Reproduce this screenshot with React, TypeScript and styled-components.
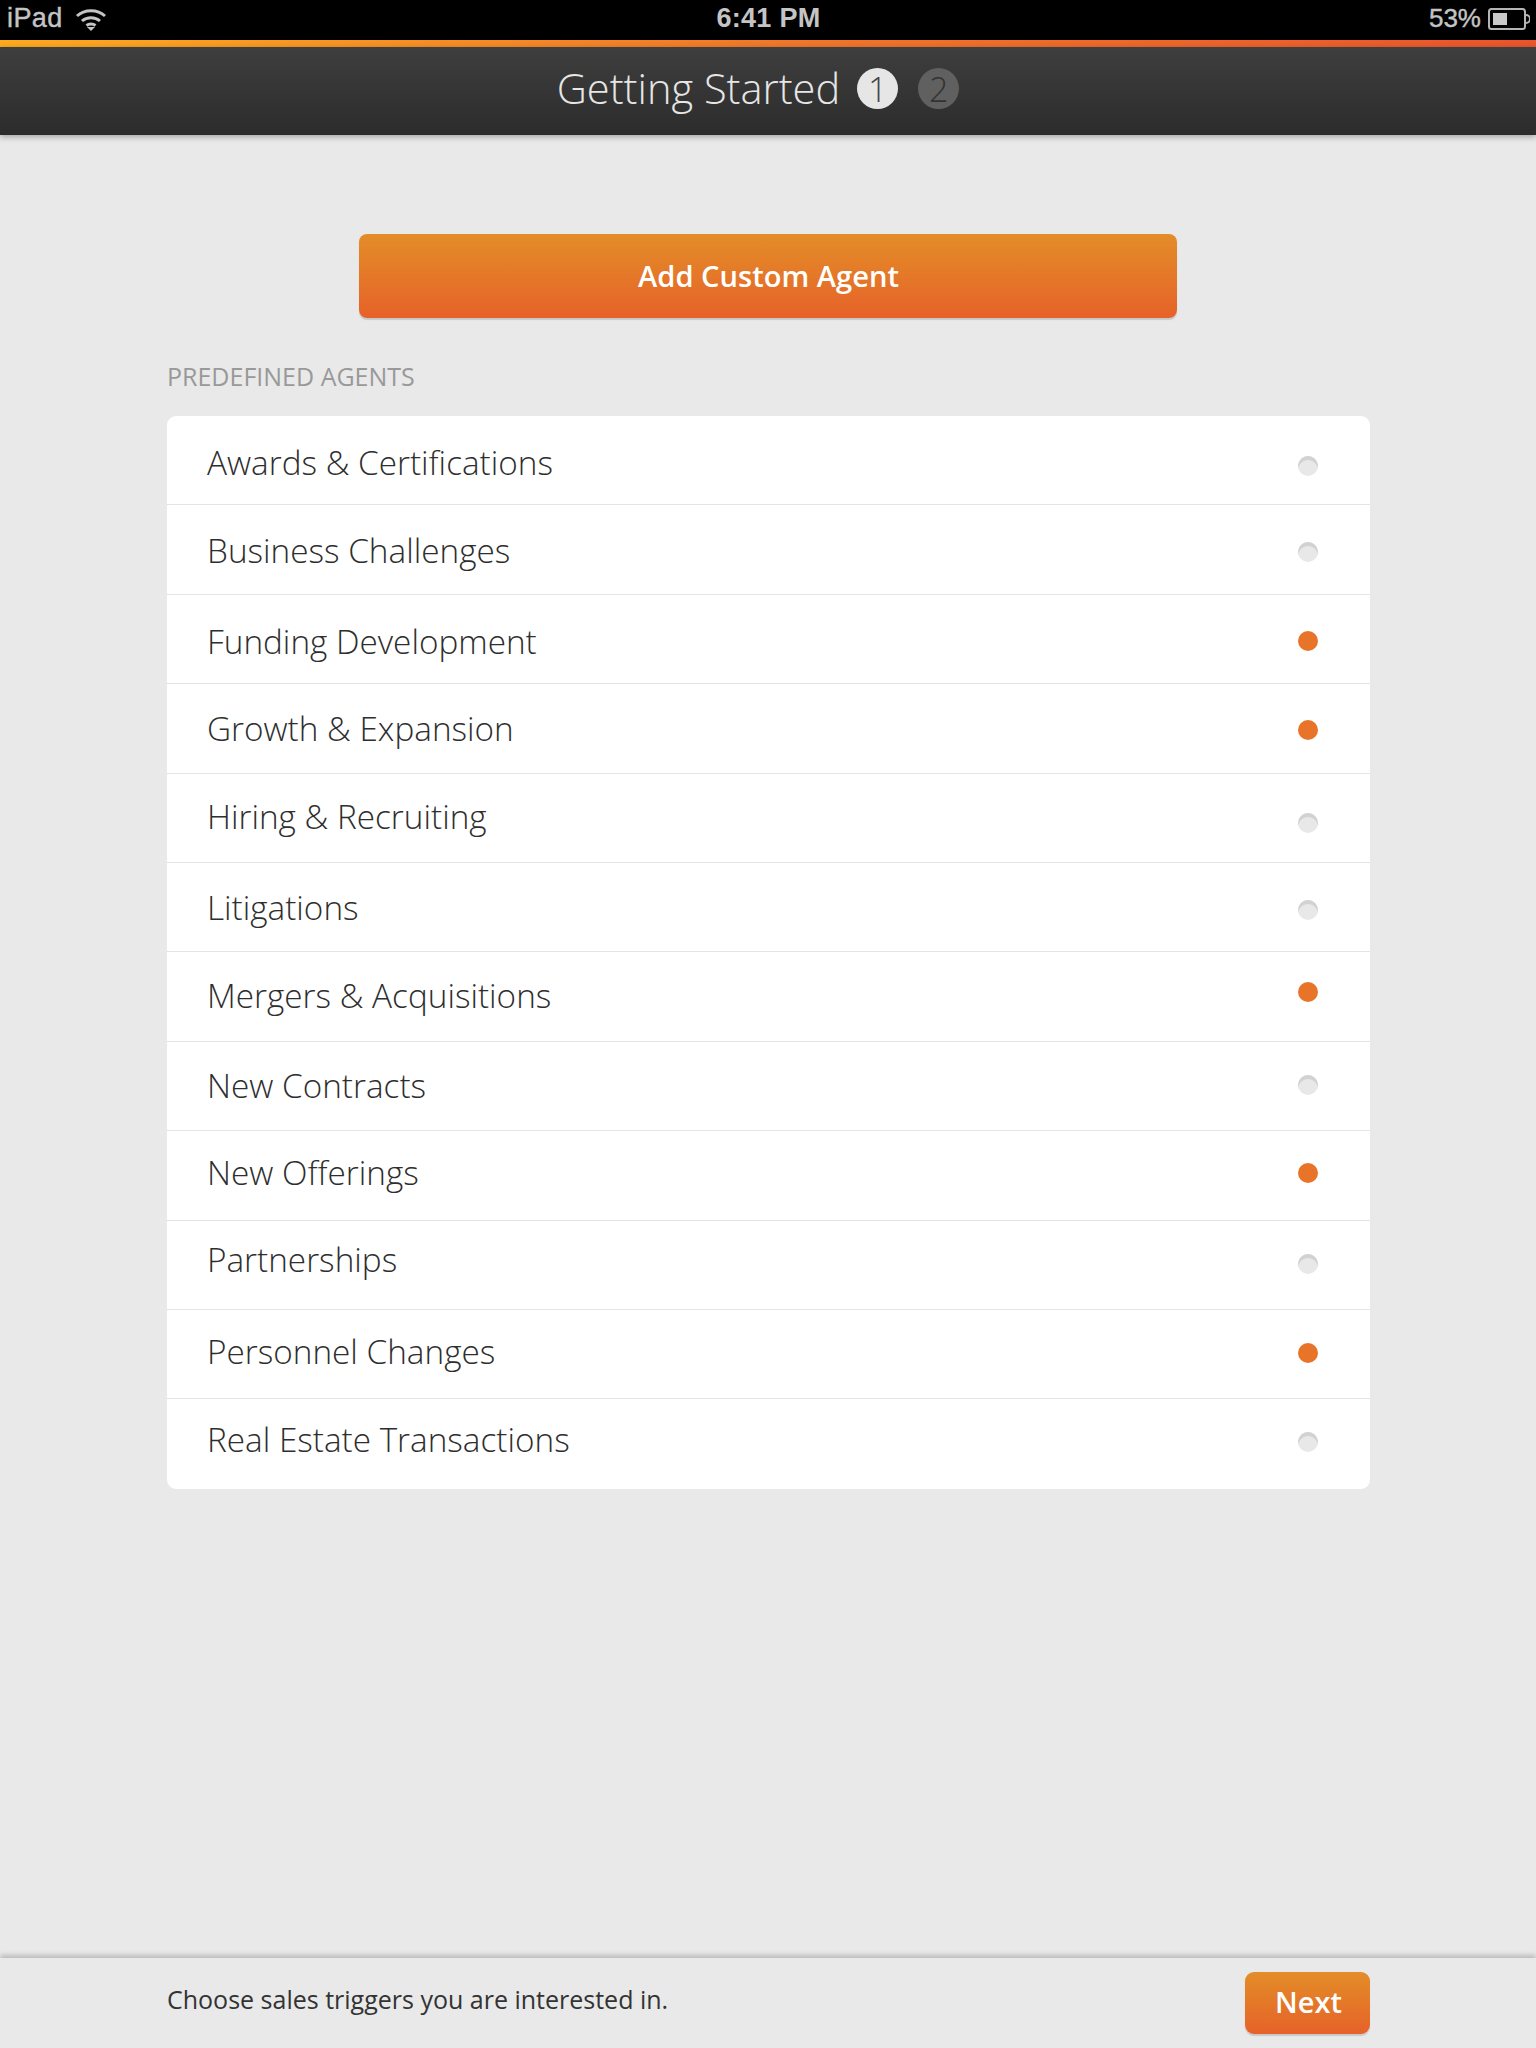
import styled, { createGlobalStyle } from "styled-components";

// the rows in the reference sit a few px off their centres, so each keeps its own nudge
const agents = [
  { name: "Awards & Certifications", on: false, textDy: 2, dotDy: 6 },
  { name: "Business Challenges", on: false, textDy: 0, dotDy: 2 },
  { name: "Funding Development", on: true, textDy: 2, dotDy: 2 },
  { name: "Growth & Expansion", on: true, textDy: 0, dotDy: 2 },
  { name: "Hiring & Recruiting", on: false, textDy: -2, dotDy: 5 },
  { name: "Litigations", on: false, textDy: 0, dotDy: 3 },
  { name: "Mergers & Acquisitions", on: true, textDy: -2, dotDy: -5 },
  { name: "New Contracts", on: false, textDy: -1, dotDy: -1 },
  { name: "New Offerings", on: true, textDy: -3, dotDy: -2 },
  { name: "Partnerships", on: false, textDy: -6, dotDy: -1 },
  { name: "Personnel Changes", on: true, textDy: -3, dotDy: -1 },
  { name: "Real Estate Transactions", on: false, textDy: -5, dotDy: -2 },
];

const Global = createGlobalStyle`
  html, body { margin: 0; padding: 0; background: #e9e9e9; }
  body { font-family: "Open Sans", "Liberation Sans", sans-serif; }
`;

const Page = styled.div`
  width: 1536px;
  height: 2048px;
  display: flex;
  flex-direction: column;
  background: #e9e9e9;
  overflow: hidden;
`;

const StatusBar = styled.div`
  height: 40px;
  flex: none;
  background: #000;
  display: grid;
  grid-template-columns: 1fr auto 1fr;
  align-items: center;
  padding: 0 6px 3px 7px;
  color: #c4c4c4;
  font-family: "Liberation Sans", Arial, sans-serif;
  font-size: 27px;
  box-sizing: border-box;
`;

const StatusLeft = styled.div`
  display: flex;
  align-items: center;
  gap: 12px;
  letter-spacing: 0.4px;
  -webkit-text-stroke: 0.4px #c4c4c4;
`;

const StatusTime = styled.div`
  font-weight: 700;
  letter-spacing: 0.3px;
`;

const StatusRight = styled.div`
  display: flex;
  align-items: center;
  justify-content: flex-end;
  gap: 7px;
  font-size: 26px;
  -webkit-text-stroke: 0.4px #c4c4c4;
`;

const Accent = styled.div`
  height: 7px;
  flex: none;
  background: linear-gradient(90deg, #fdaa1e 0%, #f0782a 50%, #e9552c 100%);
`;

const Header = styled.header`
  height: 88px;
  flex: none;
  box-sizing: border-box;
  padding: 0 20px 5px 0;
  background: linear-gradient(180deg, #3e3e3e 0%, #2c2c2c 100%);
  box-shadow: 0 2px 6px rgba(0, 0, 0, 0.3);
  display: flex;
  align-items: center;
  justify-content: center;
  position: relative;
  color: #e6e6e6;
`;

const Title = styled.h1`
  margin: 0 17px 0 0;
  font-size: 41.6px;
  font-weight: 300;
  line-height: 1;
`;

const Step = styled.span<{ $active?: boolean }>`
  width: 41px;
  height: 41px;
  border-radius: 50%;
  margin-right: ${({ $active }) => ($active ? "20px" : "0")};
  background: ${({ $active }) => ($active ? "#e6e6e6" : "#606060")};
  color: ${({ $active }) => ($active ? "#444" : "#333")};
  display: flex;
  align-items: center;
  justify-content: center;
  font-size: 34px;
  font-weight: 300;
`;

const Main = styled.main`
  flex: 1;
  padding: 99px 166px 0 167px;
  display: flex;
  flex-direction: column;
`;

const AddButton = styled.button`
  align-self: center;
  width: 818px;
  height: 84px;
  margin-right: 2px;
  padding: 0 0 0 2px;
  border: 0;
  border-radius: 8px;
  background: linear-gradient(180deg, #e38d28 0%, #e66229 100%);
  box-shadow: 0 2px 1px #c8c8c8;
  color: #fff;
  font-family: inherit;
  font-size: 29.1px;
  font-weight: 600;
`;

const SectionLabel = styled.div`
  margin: 41px 0 23px;
  font-size: 25px;
  line-height: 34px;
  color: #999;
`;

const List = styled.ul`
  margin: 0;
  padding: 0;
  list-style: none;
  background: #fff;
  border-radius: 9px;
`;

const Row = styled.li`
  height: 89.4px;
  box-sizing: border-box;
  padding: 0 40px;
  display: flex;
  align-items: center;
  justify-content: space-between;
  border-bottom: 1px solid #e4e4e4;
  &:last-child { border-bottom: 0; }
`;

const RowName = styled.span<{ $dy: number }>`
  font-size: 33.3px;
  font-weight: 300;
  color: #2e2e2e;
  transform: translateY(${({ $dy }) => $dy}px);
`;

const Dot = styled.span<{ $on: boolean; $dy: number }>`
  width: 20px;
  height: 20px;
  border-radius: 50%;
  margin-right: 12px;
  background: ${({ $on }) => ($on ? "#e87429" : "#e8e8e8")};
  box-shadow: ${({ $on }) => ($on ? "none" : "inset 0 4px 0 #d2d2d2")};
  transform: translateY(${({ $dy }) => $dy}px);
`;

const Footer = styled.footer`
  height: 90px;
  flex: none;
  box-shadow: 0 -3px 5px rgba(0, 0, 0, 0.2);
  padding: 0 166px 0 167px;
  display: flex;
  align-items: center;
  justify-content: space-between;
`;

const Hint = styled.span`
  font-size: 25px;
  color: #333;
  margin-bottom: 8px;
`;

const NextButton = styled.button`
  width: 125px;
  height: 62px;
  padding: 0 0 3px 2px;
  border: 0;
  border-radius: 9px;
  background: linear-gradient(180deg, #e38d28 0%, #e66229 100%);
  box-shadow: 0 2px 1px #c8c8c8;
  color: #fff;
  font-family: inherit;
  font-size: 29px;
  font-weight: 600;
`;

function Wifi() {
  return (
    <svg width="32" height="24" viewBox="0 0 32 24" fill="none" stroke="#c4c4c4" strokeWidth="3">
      <path d="M2 9C9.500 2 22.500 2 30 9" />
      <path d="M7 14C12 9.500 20 9.500 25 14" />
      <path d="M11.500 18.500C14 16.500 18 16.500 20.500 18.500" />
      <path d="M16 24l-4-4h8z" fill="#c4c4c4" stroke="none" />
    </svg>
  );
}

function Battery() {
  return (
    <svg width="42" height="22" viewBox="0 0 42 22" fill="none">
      <rect x="1" y="1" width="36" height="20" rx="2.500" stroke="#b5b5b5" strokeWidth="2" />
      <rect x="5" y="5" width="14" height="12" fill="#c9c9c9" />
      <path d="M38 7a4 4 0 0 1 0 8" stroke="#b5b5b5" strokeWidth="2" />
    </svg>
  );
}

export default function App() {
  return (
    <Page>
      <Global />
      <StatusBar>
        <StatusLeft>
          iPad
          <Wifi />
        </StatusLeft>
        <StatusTime>6:41 PM</StatusTime>
        <StatusRight>
          53%
          <Battery />
        </StatusRight>
      </StatusBar>
      <Accent />
      <Header>
        <Title>Getting Started</Title>
        <Step $active>1</Step>
        <Step>2</Step>
      </Header>
      <Main>
        <AddButton>Add Custom Agent</AddButton>
        <SectionLabel>PREDEFINED AGENTS</SectionLabel>
        <List>
          {agents.map((a) => (
            <Row key={a.name}>
              <RowName $dy={a.textDy}>{a.name}</RowName>
              <Dot $on={a.on} $dy={a.dotDy} />
            </Row>
          ))}
        </List>
      </Main>
      <Footer>
        <Hint>Choose sales triggers you are interested in.</Hint>
        <NextButton>Next</NextButton>
      </Footer>
    </Page>
  );
}
